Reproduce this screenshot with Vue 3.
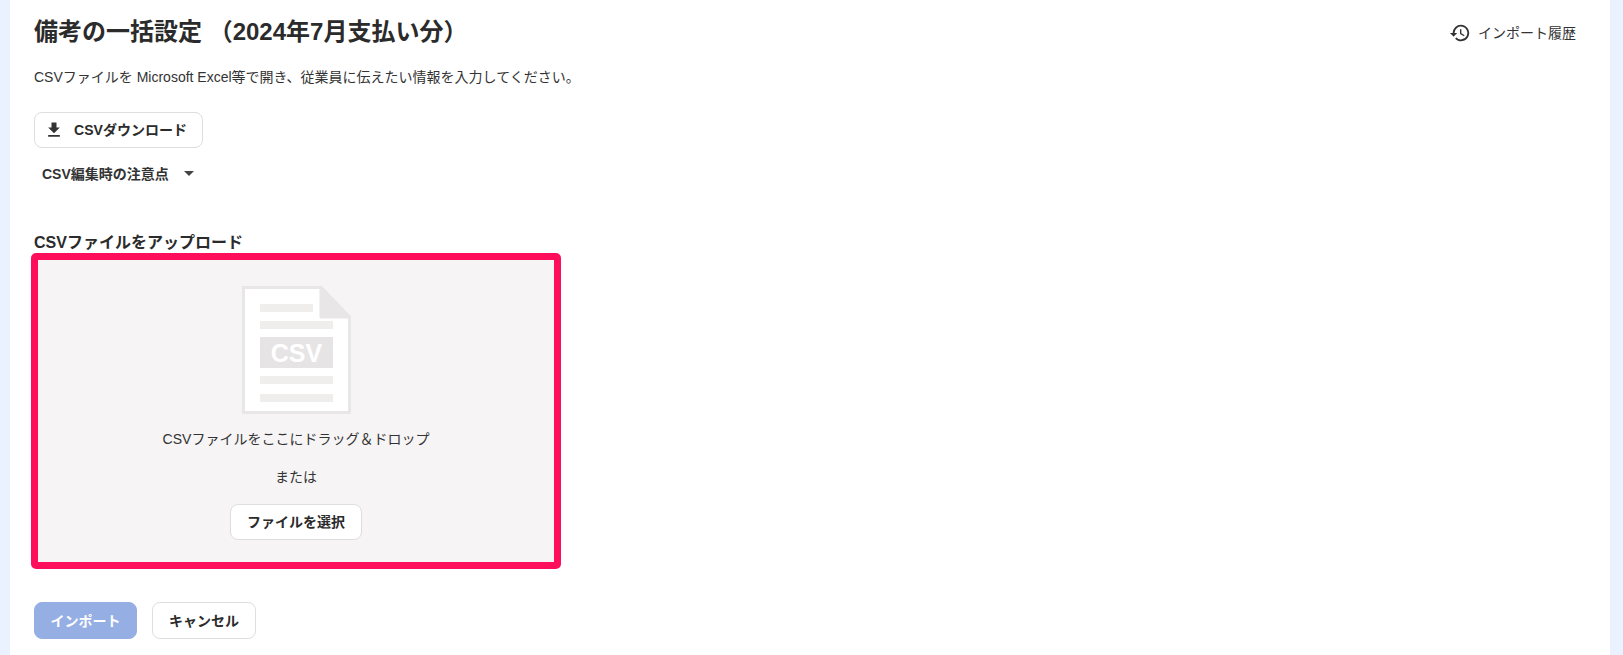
<script setup>
</script>

<template>
  <div class="page">
    <main class="panel">
      <header class="head">
        <h1 class="title">備考の一括設定 （2024年7月支払い分）</h1>
        <a class="history">
          <svg class="history-icon" viewBox="0 0 24 24" width="22" height="22">
            <path fill="#333" d="M13 3a9 9 0 0 0-9 9H1l3.89 3.89.07.14L9 12H6a7 7 0 1 1 2.05 4.95l-1.42 1.42A9 9 0 1 0 13 3zm-1 5v5l4.28 2.54.72-1.21-3.5-2.08V8H12z"/>
          </svg>
          <span>インポート履歴</span>
        </a>
      </header>

      <p class="lead">CSVファイルを Microsoft Excel等で開き、従業員に伝えたい情報を入力してください。</p>

      <button class="btn download" type="button">
        <svg viewBox="0 0 24 24" width="20" height="20">
          <path fill="#333" d="M19 9h-4V3H9v6H5l7 7 7-7zM5 18v2h14v-2H5z"/>
        </svg>
        <span>CSVダウンロード</span>
      </button>

      <div class="notes">
        <span>CSV編集時の注意点</span>
        <i class="caret"></i>
      </div>

      <h2 class="upload-label">CSVファイルをアップロード</h2>

      <section class="drop">
        <svg class="file" viewBox="0 0 109 128" width="109" height="128">
          <path d="M1.5 1.5H79L107.500 31V126.500H1.500Z" fill="#fff" stroke="#e8e6e7" stroke-width="3"/>
          <path d="M79 1.500V31H107.500Z" fill="#e8e6e7" stroke="#e8e6e7" stroke-width="3" stroke-linejoin="round"/>
          <rect x="18" y="18" width="53" height="8" fill="#f0eeed"/>
          <rect x="18" y="35" width="73" height="8" fill="#f0eeed"/>
          <rect x="18" y="51" width="73" height="31" fill="#e6e4e5"/>
          <text x="54.500" y="75.500" class="file-text">CSV</text>
          <rect x="18" y="90" width="73" height="8" fill="#f0eeed"/>
          <rect x="18" y="108" width="73" height="8" fill="#f0eeed"/>
        </svg>
        <p class="drop-text">CSVファイルをここにドラッグ＆ドロップ</p>
        <p class="drop-or">または</p>
        <button class="btn select" type="button">ファイルを選択</button>
      </section>

      <footer class="actions">
        <button class="btn primary" type="button" disabled>インポート</button>
        <button class="btn cancel" type="button">キャンセル</button>
      </footer>
    </main>
  </div>
</template>

<style>
html, body { margin: 0; background: #e9f2fe; }
</style>

<style scoped>
.page {
  height: 655px;
  overflow: hidden;
  padding: 0 13px 0 10px;
  box-sizing: border-box;
  font-family: "Liberation Sans", "Noto Sans CJK JP", sans-serif;
  color: #333;
}
.panel {
  background: #fff;
  height: 100%;
  padding: 0 24px;
  box-sizing: border-box;
  display: flex;
  flex-direction: column;
  align-items: flex-start;
}
.head {
  width: 100%;
  height: 64px;
  display: flex;
  align-items: center;
  justify-content: space-between;
}
.title {
  margin: 0;
  font-size: 24px;
  font-weight: 700;
  line-height: 32px;
  color: #2b2b2b;
}
.history {
  display: flex;
  align-items: center;
  gap: 7px;
  font-size: 14px;
  color: #333;
  margin-right: 10px;
}
.history-icon { display: block; margin-top: 2px; }
.lead {
  margin: 3px 0 0;
  font-size: 14px;
  line-height: 20px;
}
.btn {
  font-family: inherit;
  font-weight: 700;
  font-size: 14px;
  color: #2b2b2b;
  background: #fff;
  border: 1px solid #dedede;
  border-radius: 8px;
  box-sizing: border-box;
  height: 36px;
  padding: 0 0 2px;
  display: flex;
  align-items: center;
  justify-content: center;
}
.download {
  margin-top: 25px;
  width: 169px;
  gap: 10px;
  padding-right: 6px;
}
.download svg { margin-top: 2px; }
.notes {
  margin-top: 14px;
  margin-left: 8px;
  height: 22px;
  display: flex;
  align-items: center;
  gap: 15px;
  font-size: 14px;
  font-weight: 700;
}
.caret {
  width: 0;
  height: 0;
  border-left: 5px solid transparent;
  border-right: 5px solid transparent;
  border-top: 5px solid #444;
}
.upload-label {
  margin: 49px 0 0;
  font-size: 16px;
  line-height: 20px;
  font-weight: 700;
  color: #2b2b2b;
}
.drop {
  margin: 0 0 0 -3px;
  width: 530px;
  height: 316px;
  box-sizing: border-box;
  border: 7px solid #ff0f5b;
  border-radius: 5px;
  background: #f6f4f5;
  display: flex;
  flex-direction: column;
  align-items: center;
  padding-top: 26px;
}
.file { display: block; flex: none; }
.file-text {
  font-family: "Liberation Sans", sans-serif;
  font-size: 25px;
  font-weight: 700;
  fill: #fff;
  text-anchor: middle;
}
.drop-text {
  margin: 15px 0 0;
  font-size: 14px;
  line-height: 20px;
}
.drop-or {
  margin: 18px 0 0;
  font-size: 14px;
  line-height: 20px;
}
.select {
  margin-top: 17px;
  width: 132px;
}
.actions {
  margin-top: 33px;
  display: flex;
  gap: 15px;
}
.primary {
  width: 103px;
  height: 37px;
  background: #95aee3;
  border-color: #95aee3;
  color: #fff;
}
.cancel {
  width: 104px;
  height: 37px;
}
</style>
